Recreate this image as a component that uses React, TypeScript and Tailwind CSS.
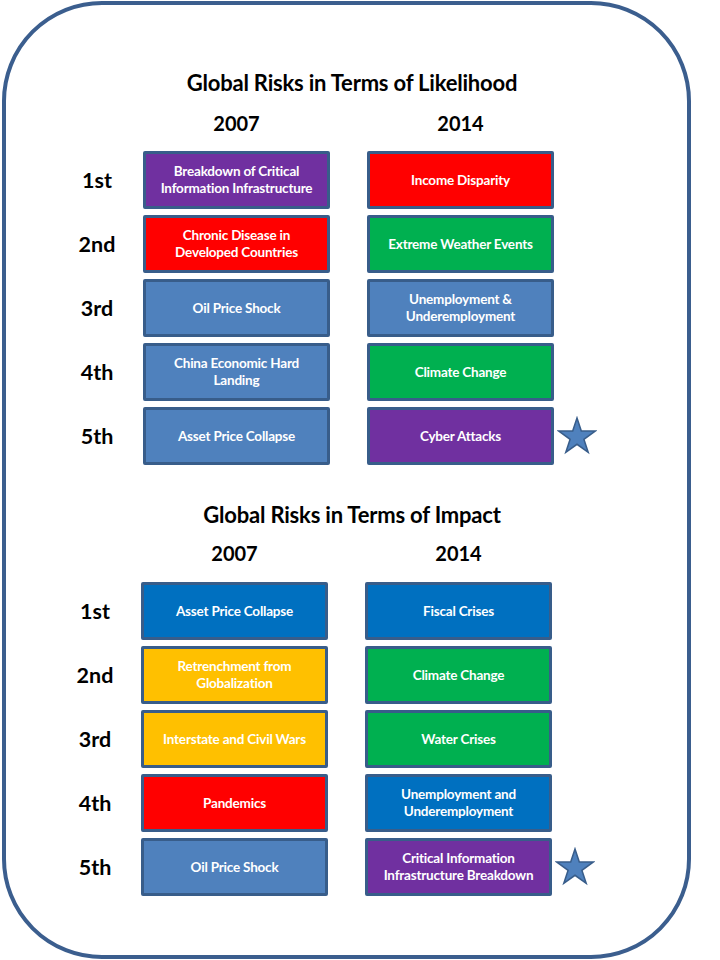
const font = "font-['Lato','Liberation_Sans',sans-serif]";

type Risk = { label: string[]; color: string };
type Row = { rank: string; left: Risk; right: Risk; star?: boolean };

const PURPLE = "bg-[#7030a0]";
const RED = "bg-[#ff0000]";
const GREEN = "bg-[#00b050]";
const STEEL = "bg-[#4f81bd]";
const BLUE = "bg-[#0070c0]";
const AMBER = "bg-[#ffc000]";

const likelihood: Row[] = [
  {
    rank: "1st",
    left: { label: ["Breakdown of Critical", "Information Infrastructure"], color: PURPLE },
    right: { label: ["Income Disparity"], color: RED },
  },
  {
    rank: "2nd",
    left: { label: ["Chronic Disease in", "Developed Countries"], color: RED },
    right: { label: ["Extreme Weather Events"], color: GREEN },
  },
  {
    rank: "3rd",
    left: { label: ["Oil Price Shock"], color: STEEL },
    right: { label: ["Unemployment &", "Underemployment"], color: STEEL },
  },
  {
    rank: "4th",
    left: { label: ["China Economic Hard", "Landing"], color: STEEL },
    right: { label: ["Climate Change"], color: GREEN },
  },
  {
    rank: "5th",
    left: { label: ["Asset Price Collapse"], color: STEEL },
    right: { label: ["Cyber Attacks"], color: PURPLE },
    star: true,
  },
];

const impact: Row[] = [
  {
    rank: "1st",
    left: { label: ["Asset Price Collapse"], color: BLUE },
    right: { label: ["Fiscal Crises"], color: BLUE },
  },
  {
    rank: "2nd",
    left: { label: ["Retrenchment from", "Globalization"], color: AMBER },
    right: { label: ["Climate Change"], color: GREEN },
  },
  {
    rank: "3rd",
    left: { label: ["Interstate and Civil Wars"], color: AMBER },
    right: { label: ["Water Crises"], color: GREEN },
  },
  {
    rank: "4th",
    left: { label: ["Pandemics"], color: RED },
    right: { label: ["Unemployment and", "Underemployment"], color: BLUE },
  },
  {
    rank: "5th",
    left: { label: ["Oil Price Shock"], color: STEEL },
    right: { label: ["Critical Information", "Infrastructure Breakdown"], color: PURPLE },
    star: true,
  },
];

function Star() {
  return (
    <svg width="40" height="40" viewBox="0 0 40 40" className="ml-[3px] shrink-0">
      <polygon
        points="20,2 24.3,15.1 38.1,15.1 26.9,23.3 31.2,36.4 20,28.3 8.8,36.4 13.1,23.3 1.9,15.1 15.7,15.1"
        fill="#4f81bd"
        stroke="#385d8a"
        strokeWidth="1.5"
      />
    </svg>
  );
}

function Box({ risk }: { risk: Risk }) {
  return (
    <div
      className={`${risk.color} flex h-[58px] w-[187px] shrink-0 flex-col items-center justify-center rounded-[2px] border-[3px] border-[#385d8a] text-center text-[13.5px] font-bold leading-[17px] tracking-[-0.2px] text-white`}
    >
      {risk.label.map((l) => (
        <span key={l}>{l}</span>
      ))}
    </div>
  );
}

function Grid({ rows, ml, yearsGap, boxesGap }: { rows: Row[]; ml: string; yearsGap: string; boxesGap: string }) {
  return (
    <div className={ml}>
      <div className={`${yearsGap} flex text-[20px] font-bold leading-[24px] text-black`}>
        <div className="w-[86px] shrink-0" />
        <div className="w-[187px] text-center">2007</div>
        <div className="w-[37px]" />
        <div className="w-[187px] text-center">2014</div>
      </div>
      <div className={`${boxesGap} flex flex-col gap-[6px]`}>
        {rows.map((r) => (
          <div key={r.rank} className="flex items-center">
            <div className="w-[80px] text-center text-[21.5px] font-bold text-black">{r.rank}</div>
            <div className="w-[6px]" />
            <Box risk={r.left} />
            <div className="w-[37px]" />
            <Box risk={r.right} />
            {r.star && <Star />}
          </div>
        ))}
      </div>
    </div>
  );
}

export default function App() {
  return (
    <main className={`${font} h-[960px] w-[720px] overflow-hidden bg-white pl-[2px] pt-px`}>
      <div className="h-[958px] w-[689px] rounded-[100px] border-4 border-[#3b5e8e]">
        <div className="ml-[126px] mt-[65px] w-[440px] text-center text-[22px] font-bold leading-[26px] tracking-[-0.2px] text-black">
          Global Risks in Terms of Likelihood
        </div>
        <Grid rows={likelihood} ml="ml-[51px]" yearsGap="mt-[15px]" boxesGap="mt-[16px]" />
        <div className="ml-[126px] mt-[37px] w-[440px] text-center text-[22px] font-bold leading-[26px] tracking-[-0.2px] text-black">
          Global Risks in Terms of Impact
        </div>
        <Grid rows={impact} ml="ml-[49px]" yearsGap="mt-[13px]" boxesGap="mt-[17px]" />
      </div>
    </main>
  );
}
